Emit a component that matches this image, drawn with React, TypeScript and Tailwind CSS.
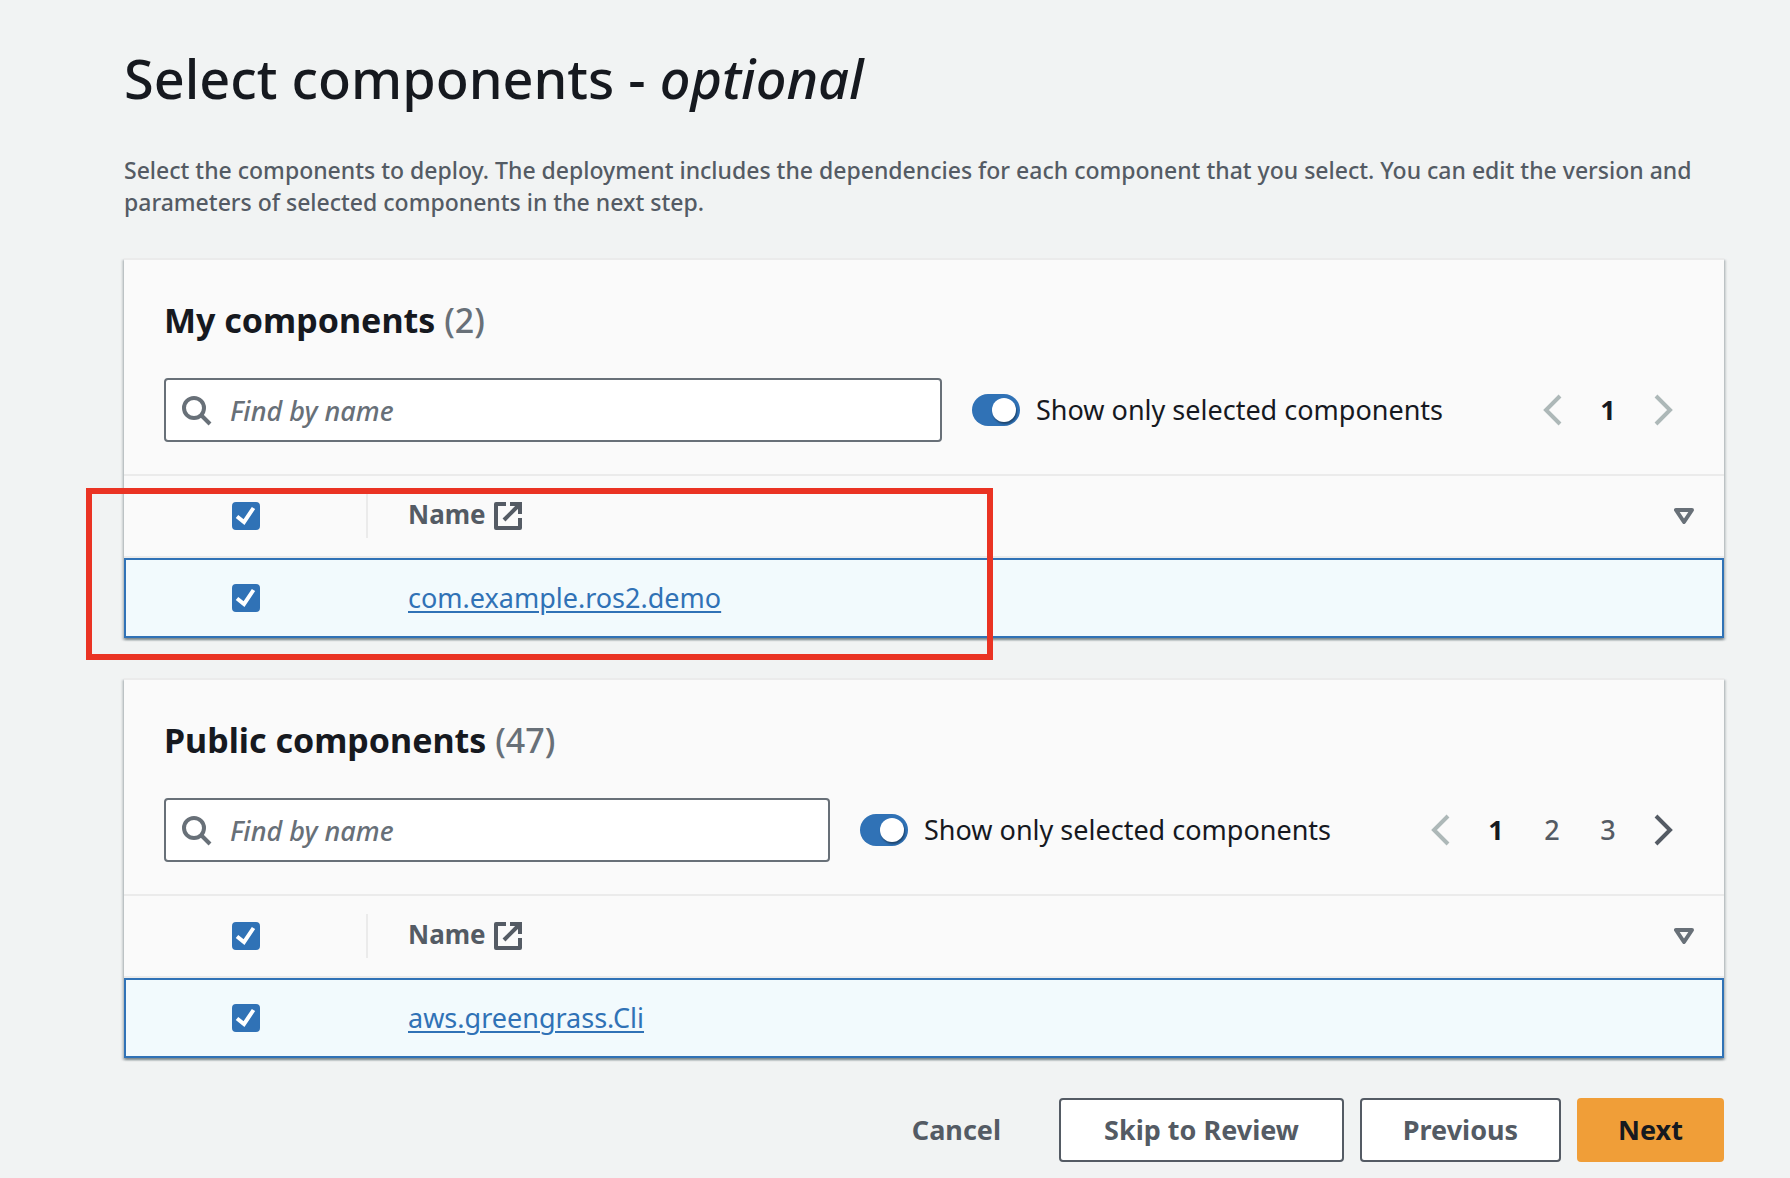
import { useId } from 'react';

function SearchIcon() {
  return (
    <svg viewBox="0 0 28 28" className="size-7 overflow-visible" fill="none" stroke="#687078" strokeWidth="4" aria-hidden="true">
      <circle cx="12" cy="12" r="10" />
      <path d="M19 19l9 9" />
    </svg>
  );
}

function ExternalIcon() {
  return (
    <svg viewBox="0 0 28 28" className="size-7 shrink-0" fill="none" stroke="#545b64" strokeWidth="4" strokeLinejoin="round" aria-hidden="true">
      <path d="M12 2H2v24h24V16" />
      <path d="M16 2h10v10" strokeLinejoin="miter" />
      <path d="M10 18L25 3" />
    </svg>
  );
}

function SortIcon() {
  return (
    <svg viewBox="0 0 20 16" className="h-4 w-5" fill="none" stroke="#687078" strokeWidth="4" strokeLinejoin="round" aria-hidden="true">
      <path d="M2 2h16l-8 12z" />
    </svg>
  );
}

function Chevron({ direction, disabled }: { direction: 'left' | 'right'; disabled: boolean }) {
  return (
    <svg viewBox="0 0 20 32" className="h-8 w-5" fill="none" stroke={disabled ? '#adb8b8' : '#545b64'} strokeWidth="4" aria-hidden="true">
      <path d={direction === 'left' ? 'M18 2L4 16l14 14' : 'M2 2l14 14L2 30'} />
    </svg>
  );
}

function Checkbox({ label }: { label: string }) {
  return (
    <label className="relative mx-auto block size-7">
      <input type="checkbox" defaultChecked aria-label={label} className="peer block size-7 appearance-none rounded border-2 border-[#687078] bg-white checked:border-[#3072b6] checked:bg-[#3072b6]" />
      <svg viewBox="0 0 28 28" className="pointer-events-none absolute inset-0 hidden size-7 peer-checked:block" fill="none" stroke="#fff" strokeWidth="4" aria-hidden="true">
        <path d="M5 14.5l7 5.5L21.5 6" />
      </svg>
    </label>
  );
}

type PanelProps = { title: string; count: number; pages: number; component: string; highlighted?: boolean };

function Panel({ title, count, pages, component, highlighted }: PanelProps) {
  const id = useId();
  return (
    <section className="relative border-t-2 border-[#ebebeb] bg-[#fafafa] shadow-[0_2px_2px_rgba(0,28,36,0.3),2px_2px_2px_rgba(0,28,36,0.15),-2px_2px_2px_rgba(0,28,36,0.15)]">
      <div className="border-b-2 border-[#ebebeb] pt-9 pr-8 pb-8 pl-10">
        <h2 className="text-[34px] leading-[48px] font-bold">
          {title} <span className="font-medium text-[#687078]">({count})</span>
        </h2>
        <div className="mt-[34px] flex items-center">
          <div className="relative min-w-0 flex-1">
            <span className="pointer-events-none absolute inset-y-0 left-[18px] flex items-center">
              <SearchIcon />
            </span>
            <input type="search" aria-label={'Find ' + title + ' by name'} placeholder="Find by name" className="block h-16 w-full rounded border-2 border-[#687078] bg-white pr-4 pl-16 text-[27px] placeholder:font-medium placeholder:text-[#687078] placeholder:italic placeholder:opacity-100" />
          </div>
          <input id={id} type="checkbox" role="switch" defaultChecked className="ml-[30px] flex h-8 w-12 shrink-0 appearance-none items-center rounded-full bg-[#687078] px-1 before:size-6 before:rounded-full before:bg-white before:shadow-[1px_2px_2px_rgba(0,0,0,0.4)] checked:justify-end checked:bg-[#3072b6]" />
          <label htmlFor={id} className="ml-4 text-[27px] leading-10 whitespace-nowrap">Show only selected components</label>
          <nav aria-label={title + ' pages'} className="ml-[81px] flex h-16 items-center text-[27px] text-[#545b64]">
            <button type="button" disabled aria-label="Previous page" className="flex w-14 justify-center"><Chevron direction="left" disabled /></button>
            {Array.from({ length: pages }, (_, i) => (
              <button type="button" key={i} className={i === 0 ? 'w-14 font-bold text-[#16191f]' : 'w-14 font-medium'}>{i + 1}</button>
            ))}
            <button type="button" disabled={pages === 1} aria-label="Next page" className="flex w-14 justify-center"><Chevron direction="right" disabled={pages === 1} /></button>
          </nav>
        </div>
      </div>
      <table className="w-full table-fixed border-separate border-spacing-0 text-left text-[27px] leading-9">
        <colgroup>
          <col className="w-[244px]" />
          <col />
        </colgroup>
        <thead>
          <tr>
            <th className="h-[82px] border-b-2 border-[#ebebeb] p-0">
              <div className="flex h-11 items-center border-r-2 border-[#ebebeb] pr-[106px] pl-[108px]"><Checkbox label={'Select all ' + title} /></div>
            </th>
            <th className="h-[82px] border-b-2 border-[#ebebeb] p-0 pr-[30px] pl-10 text-[#545b64]">
              <div className="flex items-center gap-2">
                <span className="pb-1 text-[26px]">Name</span>
                <ExternalIcon />
                <button type="button" aria-label="Sort by name" className="ml-auto"><SortIcon /></button>
              </div>
            </th>
          </tr>
        </thead>
        <tbody>
          <tr className="bg-[#f2fafd]">
            <td className="h-20 border-y-2 border-l-2 border-[#3072b6] p-0">
              <div className="pr-[108px] pl-[106px]"><Checkbox label={'Select ' + component} /></div>
            </td>
            <td className="h-20 border-y-2 border-r-2 border-[#3072b6] p-0 pl-10">
              <a href="#component" className="text-[#3072b6] underline decoration-2 underline-offset-3">{component}</a>
            </td>
          </tr>
        </tbody>
      </table>
      {highlighted && <div className="pointer-events-none absolute -bottom-[22px] -left-[38px] h-[172px] w-[907px] border-6 border-[#ea3323]" />}
    </section>
  );
}

const secondary = 'h-16 rounded border-2 border-[#545b64] bg-white text-[#545b64]';

export default function App() {
  return (
    <main className="min-h-screen bg-[#f1f3f3] pt-10 pr-[66px] pb-4 pl-[124px] font-['Noto_Sans',sans-serif] text-[#16191f]">
      <h1 className="text-[54px] leading-[76px] font-medium">
        Select components - <em>optional</em>
      </h1>
      <p className="mt-[38px] text-[23px] leading-8 font-medium text-[#545b64]">
        Select the components to deploy. The deployment includes the dependencies for each component that you select. You can edit the version and parameters of selected components in the next step.
      </p>
      <div className="mt-10 flex flex-col gap-10">
        <Panel title="My components" count={2} pages={1} component="com.example.ros2.demo" highlighted />
        <Panel title="Public components" count={47} pages={3} component="aws.greengrass.Cli" />
      </div>
      <div className="mt-10 flex justify-end gap-4 text-[27px] font-bold">
        <button type="button" className="h-16 px-[42px] text-[#545b64]">Cancel</button>
        <button type="button" className={secondary + ' min-w-[285px] px-6'}>Skip to Review</button>
        <button type="button" className={secondary + ' min-w-[201px] px-6'}>Previous</button>
        <button type="button" className="h-16 min-w-[147px] rounded bg-[#f09e38] px-6">Next</button>
      </div>
    </main>
  );
}
